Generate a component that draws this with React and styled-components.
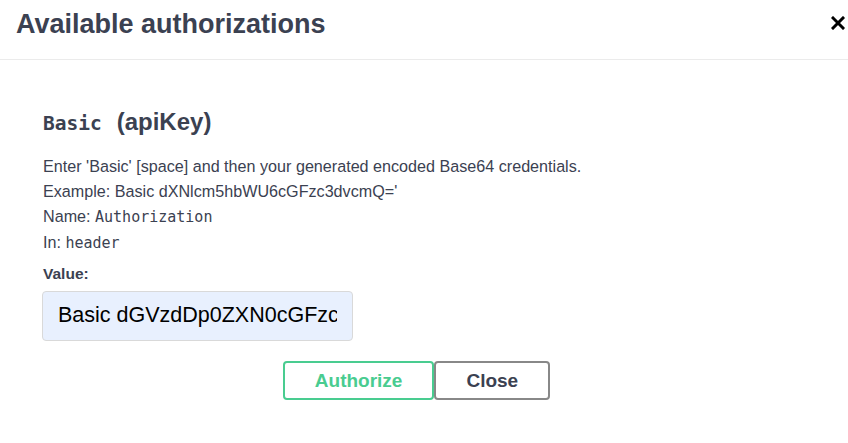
import React from 'react';
import styled, { createGlobalStyle } from 'styled-components';

const GlobalStyle = createGlobalStyle`
body {
  margin: 0;
  background: #fff;
  font-family: "Liberation Sans", Arial, sans-serif;
  color: #3b4151;
}
`

const Modal = styled.div`
width: 848px;
height: 443px;
background: #fff;
`

const Header = styled.div`
display: flex;
justify-content: space-between;
align-items: flex-start;
height: 59px;
padding: 0 0 0 16px;
border-bottom: 1px solid #ebebeb;
`

const Title = styled.h3`
margin: 0;
font-size: 27px;
line-height: 48px;
font-weight: 700;
color: #3b4151;
`

const CloseIcon = styled.button`
display: flex;
align-items: center;
justify-content: center;
width: 20px;
height: 46px;
padding: 0;
border: none;
background: none;
cursor: pointer;
`

const Body = styled.div`
padding: 47px 20px 0 43px;
`

const Heading = styled.h4`
margin: 0;
font-size: 24px;
line-height: 30px;
font-weight: 700;
color: #3b4151;
code {
  font-family: "DejaVu Sans Mono", monospace;
  font-size: 19.5px;
  font-weight: 700;
  margin-right: 15px;
}
`

const Info = styled.div`
margin-top: 14.5px;
`

const Line = styled.p`
margin: 0;
font-size: 16.15px;
line-height: 25.3px;
color: #3b4151;
code {
  font-family: "DejaVu Sans Mono", monospace;
  font-size: 15px;
}
`

const Label = styled.label`
display: block;
margin-top: 7px;
font-size: 15.5px;
line-height: 20px;
font-weight: 700;
color: #3b4151;
`

const Input = styled.input`
display: block;
box-sizing: border-box;
width: 311px;
height: 50px;
margin: 7px 0 0 -1px;
padding: 0 15px;
border: 1px solid #d9d9d9;
border-radius: 4px;
background: #e8f0fe;
font-family: "Liberation Sans", Arial, sans-serif;
font-size: 21.5px;
color: #000;
outline: none;
`

const Buttons = styled.div`
display: flex;
justify-content: center;
padding-right: 38px;
margin-top: 20.5px;
`

const Btn = styled.button`
box-sizing: border-box;
height: 39px;
margin: 0;
padding: 0 30px;
border: 2px solid ${p => p.$color};
border-radius: 4px;
background: transparent;
color: ${p => p.$text};
font-family: "Liberation Sans", Arial, sans-serif;
font-size: 19px;
font-weight: 700;
cursor: pointer;
`

export default function App() {
  return (
    <Modal>
      <GlobalStyle />
      <Header>
        <Title>Available authorizations</Title>
        <CloseIcon aria-label="Close">
          <svg width="14" height="14" viewBox="0 0 14 14">
            <path d="M2 2 L12 12 M12 2 L2 12" stroke="#000" strokeWidth="3" strokeLinecap="square" />
          </svg>
        </CloseIcon>
      </Header>
      <Body>
        <Heading><code>Basic</code>(apiKey)</Heading>
        <Info>
          <Line>Enter 'Basic' [space] and then your generated encoded Base64 credentials.</Line>
          <Line>Example: Basic dXNlcm5hbWU6cGFzc3dvcmQ='</Line>
          <Line>Name: <code>Authorization</code></Line>
          <Line>In: <code>header</code></Line>
        </Info>
        <Label htmlFor="auth-value">Value:</Label>
        <Input id="auth-value" type="text" readOnly value="Basic dGVzdDp0ZXN0cGFzc" />
        <Buttons>
          <Btn $color="#49cc90" $text="#49cc90">Authorize</Btn>
          <Btn $color="#888" $text="#3b4151">Close</Btn>
        </Buttons>
      </Body>
    </Modal>
  );
}
